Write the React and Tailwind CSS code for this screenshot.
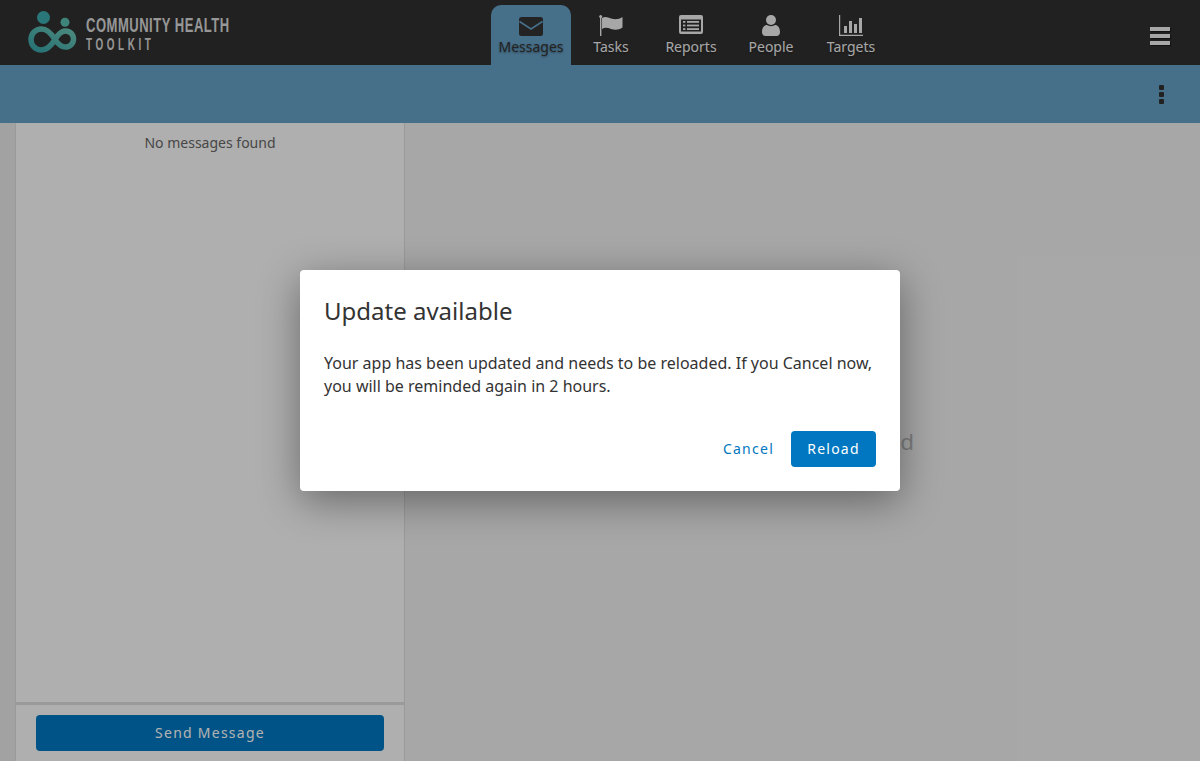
import React from 'react';

const Envelope = () => (
  <svg width="24" height="19" viewBox="0 0 24 19">
    <rect width="24" height="19" rx="2.5" fill="currentColor" />
    <path d="M0.5 4.5 L12 12 L23.5 4.5" fill="none" stroke="#659fc4" strokeWidth="1.6" />
  </svg>
);

const Flag = () => (
  <svg width="24" height="21" viewBox="0 0 24 21">
    <rect x="1" y="1" width="1.4" height="20" fill="currentColor" />
    <circle cx="1.7" cy="1.5" r="1.5" fill="currentColor" />
    <path d="M3 3 C6 1 9 2.5 12 3.5 C16 4.8 20 4.5 23.5 2 L23.5 12.5 C20 15 16 15.2 12 14 C9 13 6 12 3 14 Z" fill="currentColor" />
  </svg>
);

const Report = () => (
  <svg width="24" height="19" viewBox="0 0 24 19" className="mb-[2px]">
    <path fillRule="evenodd" fill="currentColor" d="M2 0 H22 A2 2 0 0 1 24 2 V17 A2 2 0 0 1 22 19 H2 A2 2 0 0 1 0 17 V2 A2 2 0 0 1 2 0 Z M2 4.5 V16.5 H22 V4.5 Z" />
    <rect x="4" y="6" width="2.4" height="1.8" fill="currentColor" />
    <rect x="4" y="9.6" width="2.4" height="1.8" fill="currentColor" />
    <rect x="4" y="13.2" width="2.4" height="1.8" fill="currentColor" />
    <rect x="8" y="6" width="12" height="1.8" fill="currentColor" />
    <rect x="8" y="9.6" width="12" height="1.8" fill="currentColor" />
    <rect x="8" y="13.2" width="12" height="1.8" fill="currentColor" />
  </svg>
);

const Person = () => (
  <svg width="18" height="21" viewBox="0 0 18 21">
    <circle cx="9" cy="5" r="5" fill="currentColor" />
    <path d="M0 17 C0 12.5 2.5 10 5 10 C7 11.5 11 11.5 13 10 C15.5 10 18 12.5 18 17 C18 19.5 16.5 21 14.5 21 H3.5 C1.5 21 0 19.5 0 17 Z" fill="currentColor" />
  </svg>
);

const Bars = () => (
  <svg width="24" height="21" viewBox="0 0 24 21">
    <path d="M0 0 H1.2 V19.8 H24 V21 H0 Z" fill="currentColor" />
    <rect x="5" y="11" width="3" height="7" fill="currentColor" />
    <rect x="10" y="6" width="3" height="12" fill="currentColor" />
    <rect x="15" y="9" width="3" height="9" fill="currentColor" />
    <rect x="20" y="3" width="3" height="15" fill="currentColor" />
  </svg>
);

const Logo = () => (
  <svg width="300" height="44" viewBox="0 0 300 44" className="block">
    <defs>
      <linearGradient id="loop" x1="0" y1="1" x2="1" y2="0">
        <stop offset="0" stopColor="#38a3a8" />
        <stop offset="1" stopColor="#6cc5b4" />
      </linearGradient>
    </defs>
    <circle cx="15.5" cy="7.5" r="6.5" fill="#3cabac" />
    <circle cx="37" cy="12.3" r="4.5" fill="#5bbdb0" />
    <path
      d="M27 29.5 C23 23 19 19 13.5 19 C7.5 19 3 23.5 3 29.5 C3 35.5 7.5 40 13.5 40 C19 40 23 36 27 29.5 C30 24.5 33 21 37.5 21 C42 21 45.5 24.5 45.5 29 C45.5 33.5 42 37 37.5 37 C33 37 30 34 27 29.5 Z"
      fill="none"
      stroke="url(#loop)"
      strokeWidth="5.5"
    />
    <text transform="translate(58 22) scale(0.62 1)" fill="#d8d8d8" fontFamily="Liberation Sans, sans-serif" fontWeight="700" fontSize="21" textLength="231" lengthAdjust="spacing">COMMUNITY HEALTH</text>
    <text transform="translate(58 39.8) scale(0.6 1)" fill="#d8d8d8" fontFamily="Liberation Sans, sans-serif" fontWeight="700" fontSize="16.5" textLength="108" lengthAdjust="spacing">TOOLKIT</text>
  </svg>
);

const tabs = [
  { label: 'Messages', icon: <Envelope />, active: true },
  { label: 'Tasks', icon: <Flag /> },
  { label: 'Reports', icon: <Report /> },
  { label: 'People', icon: <Person /> },
  { label: 'Targets', icon: <Bars /> },
];

export default function App() {
  return (
    <div className="relative h-[761px] w-[1200px] overflow-hidden bg-[#f0f0f0] font-['Noto_Sans',sans-serif] text-[#333]">
      {/* Top nav */}
      <header className="flex h-[65px] bg-[#303030]">
        <div className="w-[491px] pl-[28px] pt-[10px]">
          <Logo />
        </div>
        <nav className="flex pt-[5px]">
          {tabs.map((tab) => (
            <div
              key={tab.label}
              className={`flex h-[60px] w-[80px] flex-col items-center rounded-t-[10px] ${tab.active ? 'bg-[#659fc4] text-[#333]' : 'text-[#f0f0f0]'}`}
            >
              <div className="flex h-[32px] items-end pb-px">{tab.icon}</div>
              <span className="text-[14px] leading-[20px] [text-shadow:0_1px_2px_rgba(0,0,0,0.4)]">{tab.label}</span>
            </div>
          ))}
        </nav>
        <div className="flex flex-1 items-center justify-end pr-[30px] pt-[6px]">
          <div className="flex w-[20px] flex-col gap-[3px]">
            <div className="h-[4px] bg-[#f0f0f0] shadow-[1px_1px_1px_rgba(0,0,0,0.5)]" />
            <div className="h-[4px] bg-[#f0f0f0] shadow-[1px_1px_1px_rgba(0,0,0,0.5)]" />
            <div className="h-[4px] bg-[#f0f0f0] shadow-[1px_1px_1px_rgba(0,0,0,0.5)]" />
          </div>
        </div>
      </header>

      {/* Sub header */}
      <div className="flex h-[58px] items-center justify-end bg-[#659fc4] pr-[36px]">
        <div className="flex flex-col gap-[2px]">
          <div className="h-[5px] w-[5px] rounded-[1px] bg-[#303030]" />
          <div className="h-[5px] w-[5px] rounded-[1px] bg-[#303030]" />
          <div className="h-[5px] w-[5px] rounded-[1px] bg-[#303030]" />
        </div>
      </div>

      {/* Content */}
      <div className="flex h-[638px]">
        <div className="w-[15px] bg-[#e8e8e8]" />
        <aside className="flex w-[390px] flex-col border-x border-[#ddd] bg-[#fbfbfb]">
          <div className="flex-1 pt-[10px] text-center text-[14px] leading-[20px] text-[#666]">No messages found</div>
          <div className="h-[59px] border-t-[3px] border-[#ddd] px-[20px] pt-[10px]">
            <button className="h-[36px] w-full rounded-[4px] bg-[#0077c0] pb-[2px] text-[14px] tracking-[1.25px] text-white">Send Message</button>
          </div>
        </aside>
        <main className="flex flex-1 items-center justify-center">
          <span className="text-[22.4px] text-[#b5b5b5]">No message selected</span>
        </main>
      </div>

      {/* Update modal */}
      <div className="absolute inset-0 flex items-center justify-center bg-black/30">
        <div className="flex h-[221px] w-[600px] flex-col rounded-[4px] bg-white p-[24px] shadow-[0_10px_40px_rgba(0,0,0,0.4)]">
          <h2 className="text-[24px] leading-[34px] text-[#333]">Update available</h2>
          <p className="mt-[24px] text-[16px] leading-[23px] text-[#333]">
            Your app has been updated and needs to be reloaded. If you Cancel now, you will be reminded again in 2 hours.
          </p>
          <div className="mt-auto flex items-center justify-end gap-[17px]">
            <button className="pb-[2px] text-[14px] tracking-[1.25px] text-[#0077c0]">Cancel</button>
            <button className="h-[36px] w-[85px] rounded-[4px] bg-[#0077c0] pb-[2px] text-[14px] tracking-[1.25px] text-white">Reload</button>
          </div>
        </div>
      </div>
    </div>
  );
}
